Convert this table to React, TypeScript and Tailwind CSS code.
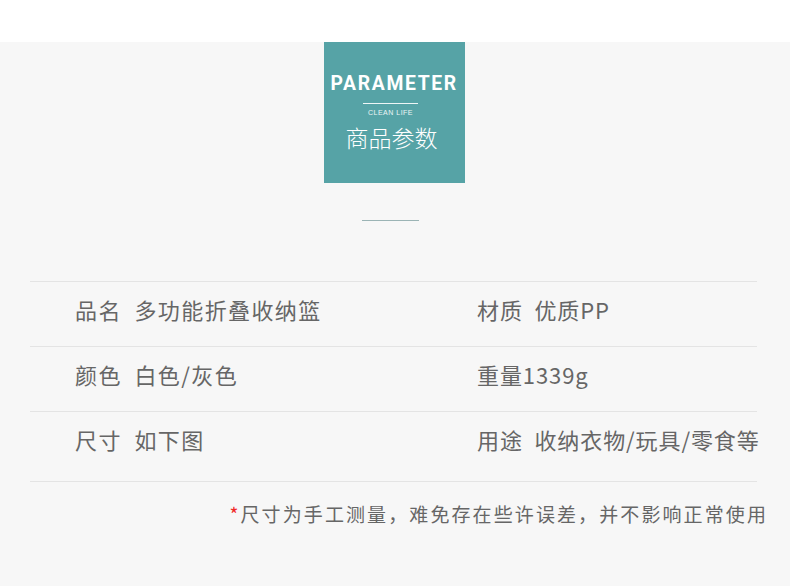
const rows = [
  { left: "品名  多功能折叠收纳篮", right: "材质  优质PP", h: "h-[65px]" },
  { left: "颜色  白色/灰色", right: "重量1339g", h: "h-[65px]" },
  { left: "尺寸  如下图", right: "用途  收纳衣物/玩具/零食等", h: "h-[70px]" },
];

export default function App() {
  return (
    <div className="w-[790px] h-[586px] overflow-hidden bg-[#f7f7f7] font-['Noto_Sans_CJK_SC',sans-serif]">
      <div className="h-[42px] bg-white" />
      <div className="flex flex-col items-center">
        <div className="ml-[-1px] w-[141px] h-[141px] bg-[#56a3a6] flex flex-col items-center text-white">
          <div className="mt-[31px] ml-[-1px] text-[21px] leading-none font-bold tracking-[1.8px] scale-x-[0.92] font-['Roboto',sans-serif]">
            PARAMETER
          </div>
          <div className="mt-[9px] ml-[-9px] w-[55px] h-px bg-white/90" />
          <div className="mt-[5px] ml-[-8px] text-[7px] leading-none tracking-[0.5px] font-['Liberation_Sans',sans-serif] text-white/90">
            CLEAN LIFE
          </div>
          <div className="mt-[10px] ml-[-6px] text-[23px] leading-none font-light">商品参数</div>
        </div>
        <div className="mt-[37px] ml-[-9px] w-[57px] h-px bg-[#9bb4b5]" />
        <div className="mt-[60px] w-[727px] ml-[-3px] border-t border-[#e4e4e4]">
          {rows.map((r, i) => (
            <div key={i} className={`${r.h} border-b border-[#e4e4e4] grid grid-cols-[447px_1fr] text-[22px] leading-none text-[#666] whitespace-pre`}>
              <div className="pl-[45px] pt-[16px] tracking-[1.4px]">{r.left}</div>
              <div className="pt-[16px] tracking-[0.9px]">{r.right}</div>
            </div>
          ))}
        </div>
        <div className="self-end pr-[22px] mt-[22px] text-[19px] leading-none text-[#666] tracking-[2.1px]">
          <span className="text-[#f02828]">*</span>尺寸为手工测量，难免存在些许误差，并不影响正常使用
        </div>
      </div>
    </div>
  );
}
